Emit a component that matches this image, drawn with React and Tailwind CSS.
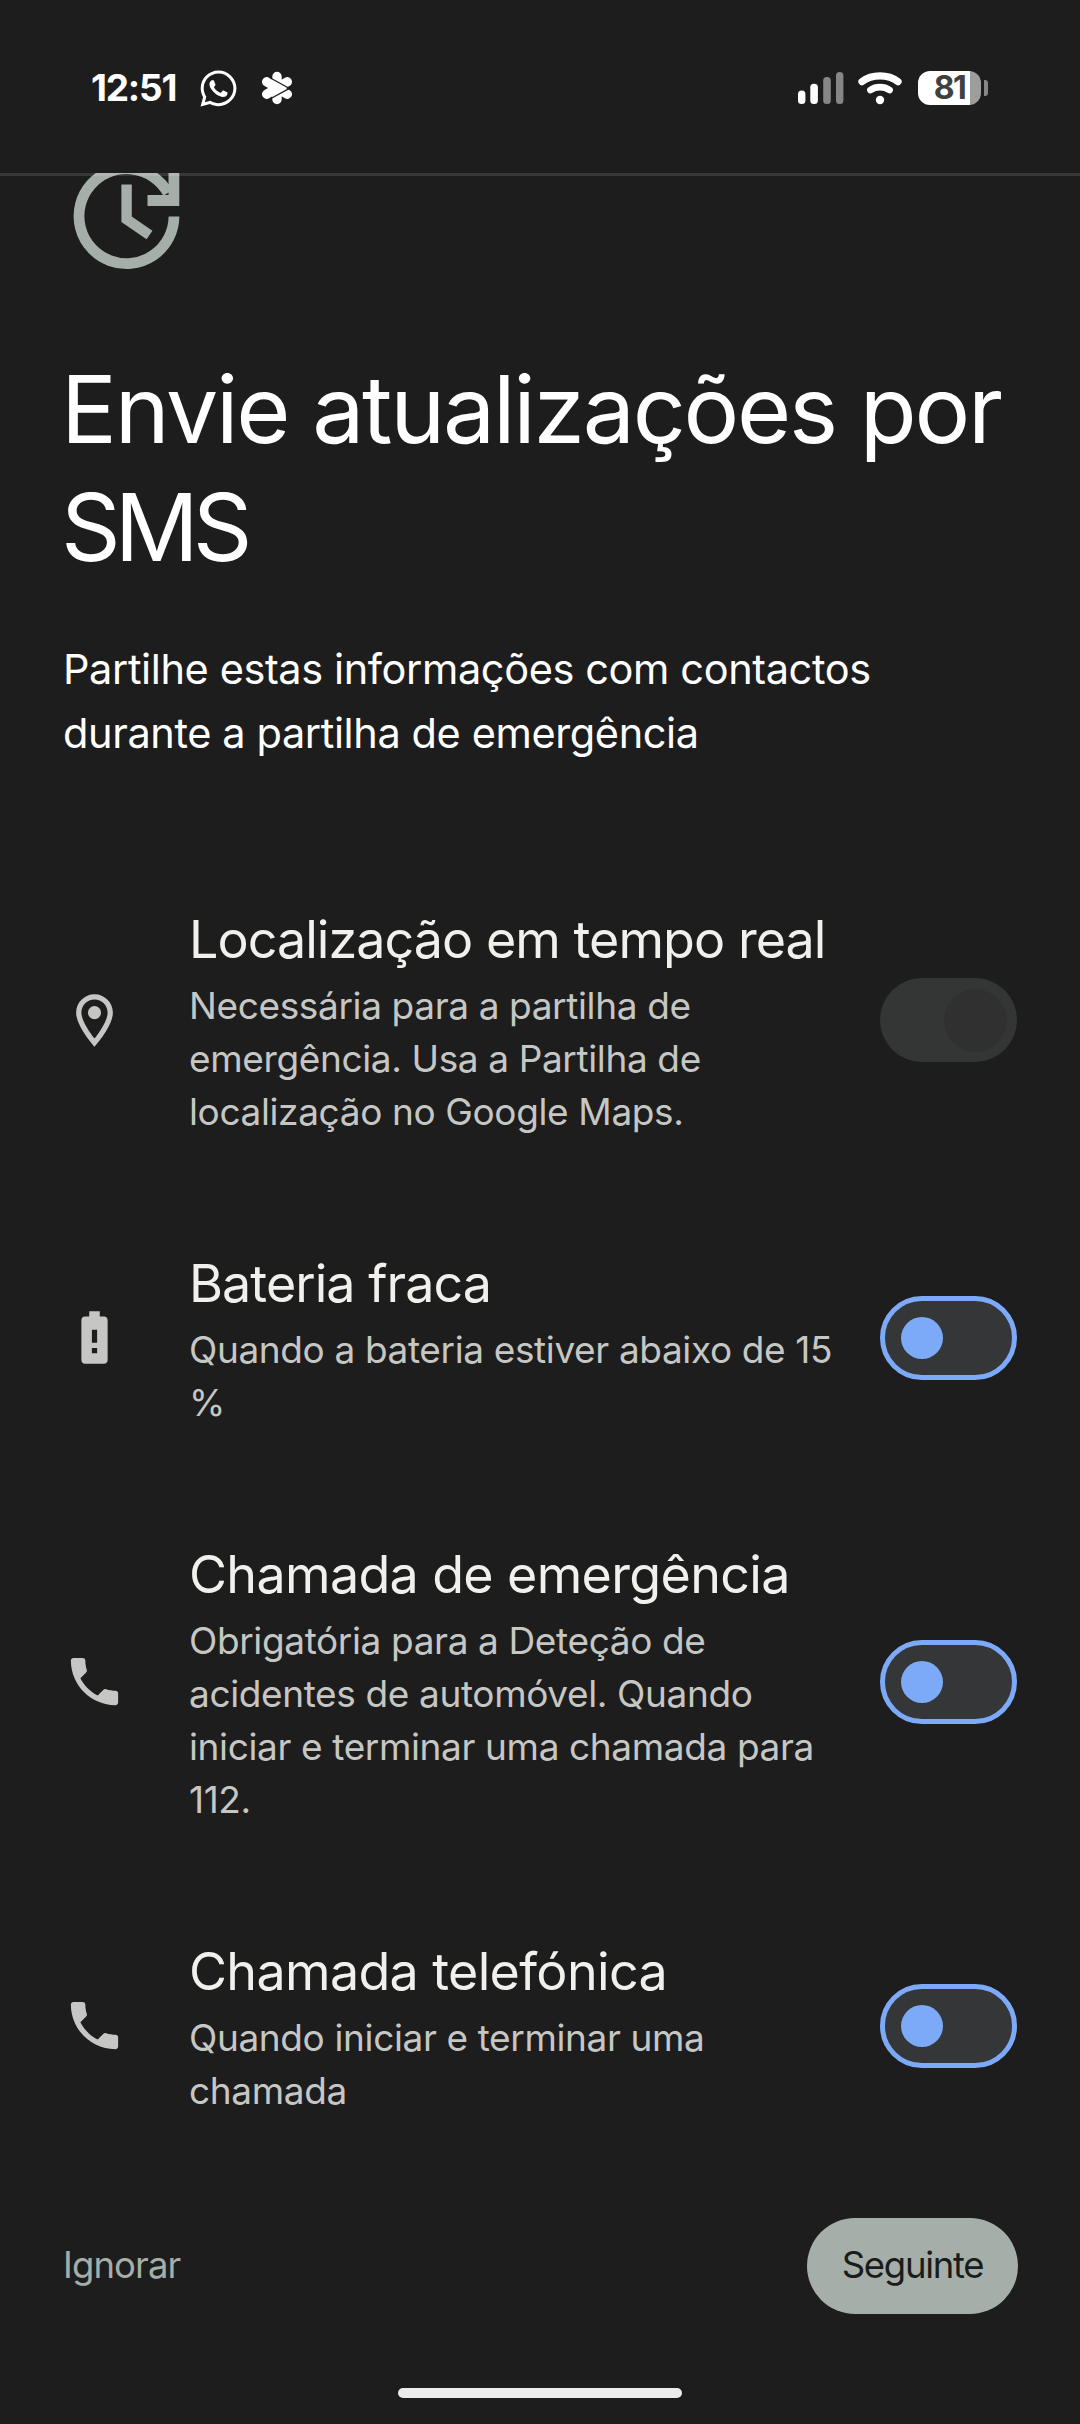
import { useState } from "react";
import { FaWhatsapp } from "react-icons/fa";
import { MdOutlineLocationOn, MdBatteryAlert, MdPhone } from "react-icons/md";

const OPTIONS = [
  {
    id: "location",
    icon: MdOutlineLocationOn,
    title: "Localização em tempo real",
    tracking: "tracking-[-0.95px]",
    lines: ["Necessária para a partilha de", "emergência. Usa a Partilha de", "localização no Google Maps."],
    locked: true,
  },
  {
    id: "battery",
    icon: MdBatteryAlert,
    title: "Bateria fraca",
    tracking: "tracking-[-0.95px]",
    lines: ["Quando a bateria estiver abaixo de 15", "%"],
  },
  {
    id: "emergency",
    icon: MdPhone,
    title: "Chamada de emergência",
    tracking: "tracking-[-0.65px]",
    lines: ["Obrigatória para a Deteção de", "acidentes de automóvel. Quando", "iniciar e terminar uma chamada para", "112."],
  },
  {
    id: "phone",
    icon: MdPhone,
    title: "Chamada telefónica",
    tracking: "tracking-[-0.65px]",
    lines: ["Quando iniciar e terminar uma", "chamada"],
  },
];

const FlowerIcon = () => (
  <svg width="32" height="34" viewBox="-16 -17 32 34" fill="#fff">
    <circle r="7" />
    <g stroke="#fff" strokeWidth="9.4" strokeLinecap="round">
      <path d="M0 -11.5V11.5M-10.3 -6.2L10.3 6.2M-10.3 6.2L10.3 -6.2" />
    </g>
    <path d="M-7.5 -10.5L12.5 0.4L-7.5 11.3" fill="none" stroke="#1d1d1d" strokeWidth="1.2" />
  </svg>
);

const SignalIcon = () => (
  <svg width="46" height="34" viewBox="0 0 46 34">
    <rect x="0" y="19.5" width="7.4" height="13.5" rx="3.5" fill="#fff" />
    <rect x="12.3" y="12.7" width="7.6" height="20.3" rx="3.5" fill="#fff" />
    <rect x="25.2" y="6" width="7.6" height="27" rx="3.5" fill="#868686" />
    <rect x="38" y="1" width="7.4" height="32" rx="3.5" fill="#868686" />
  </svg>
);

const WifiIcon = () => (
  <svg width="44" height="34" viewBox="0 0 44 34" fill="none" stroke="#fff" strokeLinecap="round">
    <path d="M4 10.6C14 3 30 3 40 10.6" strokeWidth="7.2" />
    <path d="M12.5 19C18 15.2 26 15.2 31.5 19" strokeWidth="6.8" />
    <circle cx="22" cy="29" r="4.2" fill="#fff" stroke="none" />
  </svg>
);

const UpdateIcon = () => (
  <svg width="141" height="141" viewBox="0 0 141 141" fill="none" stroke="#a5aea9" strokeWidth="10.8">
    <path d="M118 71.5A47.5 47.5 0 1 1 112 48" />
    <path d="M117.9 17.6V55.5H91.5" />
    <path d="M70.6 39.5V74.2L93.5 90" strokeWidth="10.4" />
  </svg>
);

const StatusBar = () => (
  <header className="relative z-10 h-[173px] shrink-0 bg-[#1d1d1d] pt-[68px]">
    <div className="flex h-10 items-center pr-[92px] pl-[91px]">
      <span className="w-[109px] text-[37px] leading-10 font-bold tracking-[-1.2px] text-white">12:51</span>
      <FaWhatsapp size={41} color="#fff" className="-ml-0.5" />
      <span className="ml-[22px]"><FlowerIcon /></span>
      <div className="ml-auto flex items-center">
        <SignalIcon />
        <span className="ml-3.5"><WifiIcon /></span>
        <div className="ml-4 flex h-[34px] w-[63px] items-center justify-center rounded-[12px] bg-linear-to-r from-white from-[83%] to-[#9d9d9d] to-[83%]">
          <span className="text-[32px] leading-none font-bold tracking-[-1.6px] text-[#404040]">81</span>
        </div>
        <div className="ml-[3px] h-4 w-1 rounded-r-[3px] bg-[#868686]" />
      </div>
    </div>
  </header>
);

const Toggle = ({ on, disabled, onChange }) => {
  if (disabled) {
    return (
      <button type="button" role="switch" aria-checked="true" disabled
        className="flex h-[84px] w-[137px] shrink-0 items-center justify-end rounded-full bg-[#343636] pr-[10.5px]">
        <span className="size-[63px] rounded-full bg-[#303030]" />
      </button>
    );
  }
  return (
    <button type="button" role="switch" aria-checked={on} onClick={onChange}
      className={`flex h-[84px] w-[137px] shrink-0 items-center rounded-full border-[5.25px] border-[#7caaf9] bg-[#343637] px-4 ${on ? "justify-end" : "justify-start"}`}>
      <span className="size-[42px] rounded-full bg-[#7caaf9]" />
    </button>
  );
};

const OptionRow = ({ option, on, onChange }) => {
  const Icon = option.icon;
  return (
    <div className="flex items-center">
      <Icon size={63} color="#c6c7c4" className="shrink-0" />
      <div className="ml-[63px] flex-1 pt-[5px] whitespace-nowrap">
        <h2 className={`mb-[7px] text-[52px] leading-[64px] text-[#f1f0ed] ${option.tracking}`}>{option.title}</h2>
        <p className="text-[37px] leading-[53px] tracking-[-0.37px] text-[#c6c7c4]">
          {option.lines.map((line) => <span key={line} className="block">{line}</span>)}
        </p>
      </div>
      <Toggle on={on} disabled={option.locked} onChange={onChange} />
    </div>
  );
};

export default function App() {
  const [enabled, setEnabled] = useState({});

  const toggle = (id) => setEnabled({ ...enabled, [id]: !enabled[id] });

  return (
    <div className="flex h-[2424px] w-[1080px] flex-col overflow-hidden bg-[#1d1d1d] font-['Inter',sans-serif]">
      <StatusBar />
      <div className="relative z-10 -mb-[3px] h-[3px] shrink-0 bg-white/12" />

      <main className="-mt-[28.5px] flex-1 pr-[63px] pl-[63px]">
        <div className="ml-[-7.5px]"><UpdateIcon /></div>

        <h1 className="-ml-0.5 mt-16 text-[93px] leading-[118px] tracking-[-2.25px] whitespace-nowrap text-white">
          Envie atualizações por
          <span className="block tracking-[-6px]">SMS</span>
        </h1>
        <p className="mt-[51px] text-[41.5px] leading-[64px] tracking-[-0.39px] text-white">
          Partilhe estas informações com contactos<br />
          durante a partilha de emergência
        </p>

        <div className="mt-[138px] flex flex-col gap-[109px]">
          {OPTIONS.map((option) => (
            <OptionRow key={option.id} option={option} on={!!enabled[option.id]} onChange={() => toggle(option.id)} />
          ))}
        </div>
      </main>

      {/* Actions */}
      <footer className="flex h-[206px] shrink-0 items-start justify-between pr-[62px] pl-[63px]">
        <button type="button" className="h-24 pb-0.5 text-[36.5px] tracking-[-0.9px] text-[#a5aea9]">Ignorar</button>
        <button type="button" className="h-24 w-[211px] rounded-full bg-[#a5aea9] pb-0.5 text-[36.5px] tracking-[-1.3px] text-[#1a1c1b]">Seguinte</button>
      </footer>

      {/* Home indicator */}
      <div className="-mt-9 mb-[26px] h-2.5 w-[284px] shrink-0 self-center rounded-full bg-[#ececec]" />
    </div>
  );
}
